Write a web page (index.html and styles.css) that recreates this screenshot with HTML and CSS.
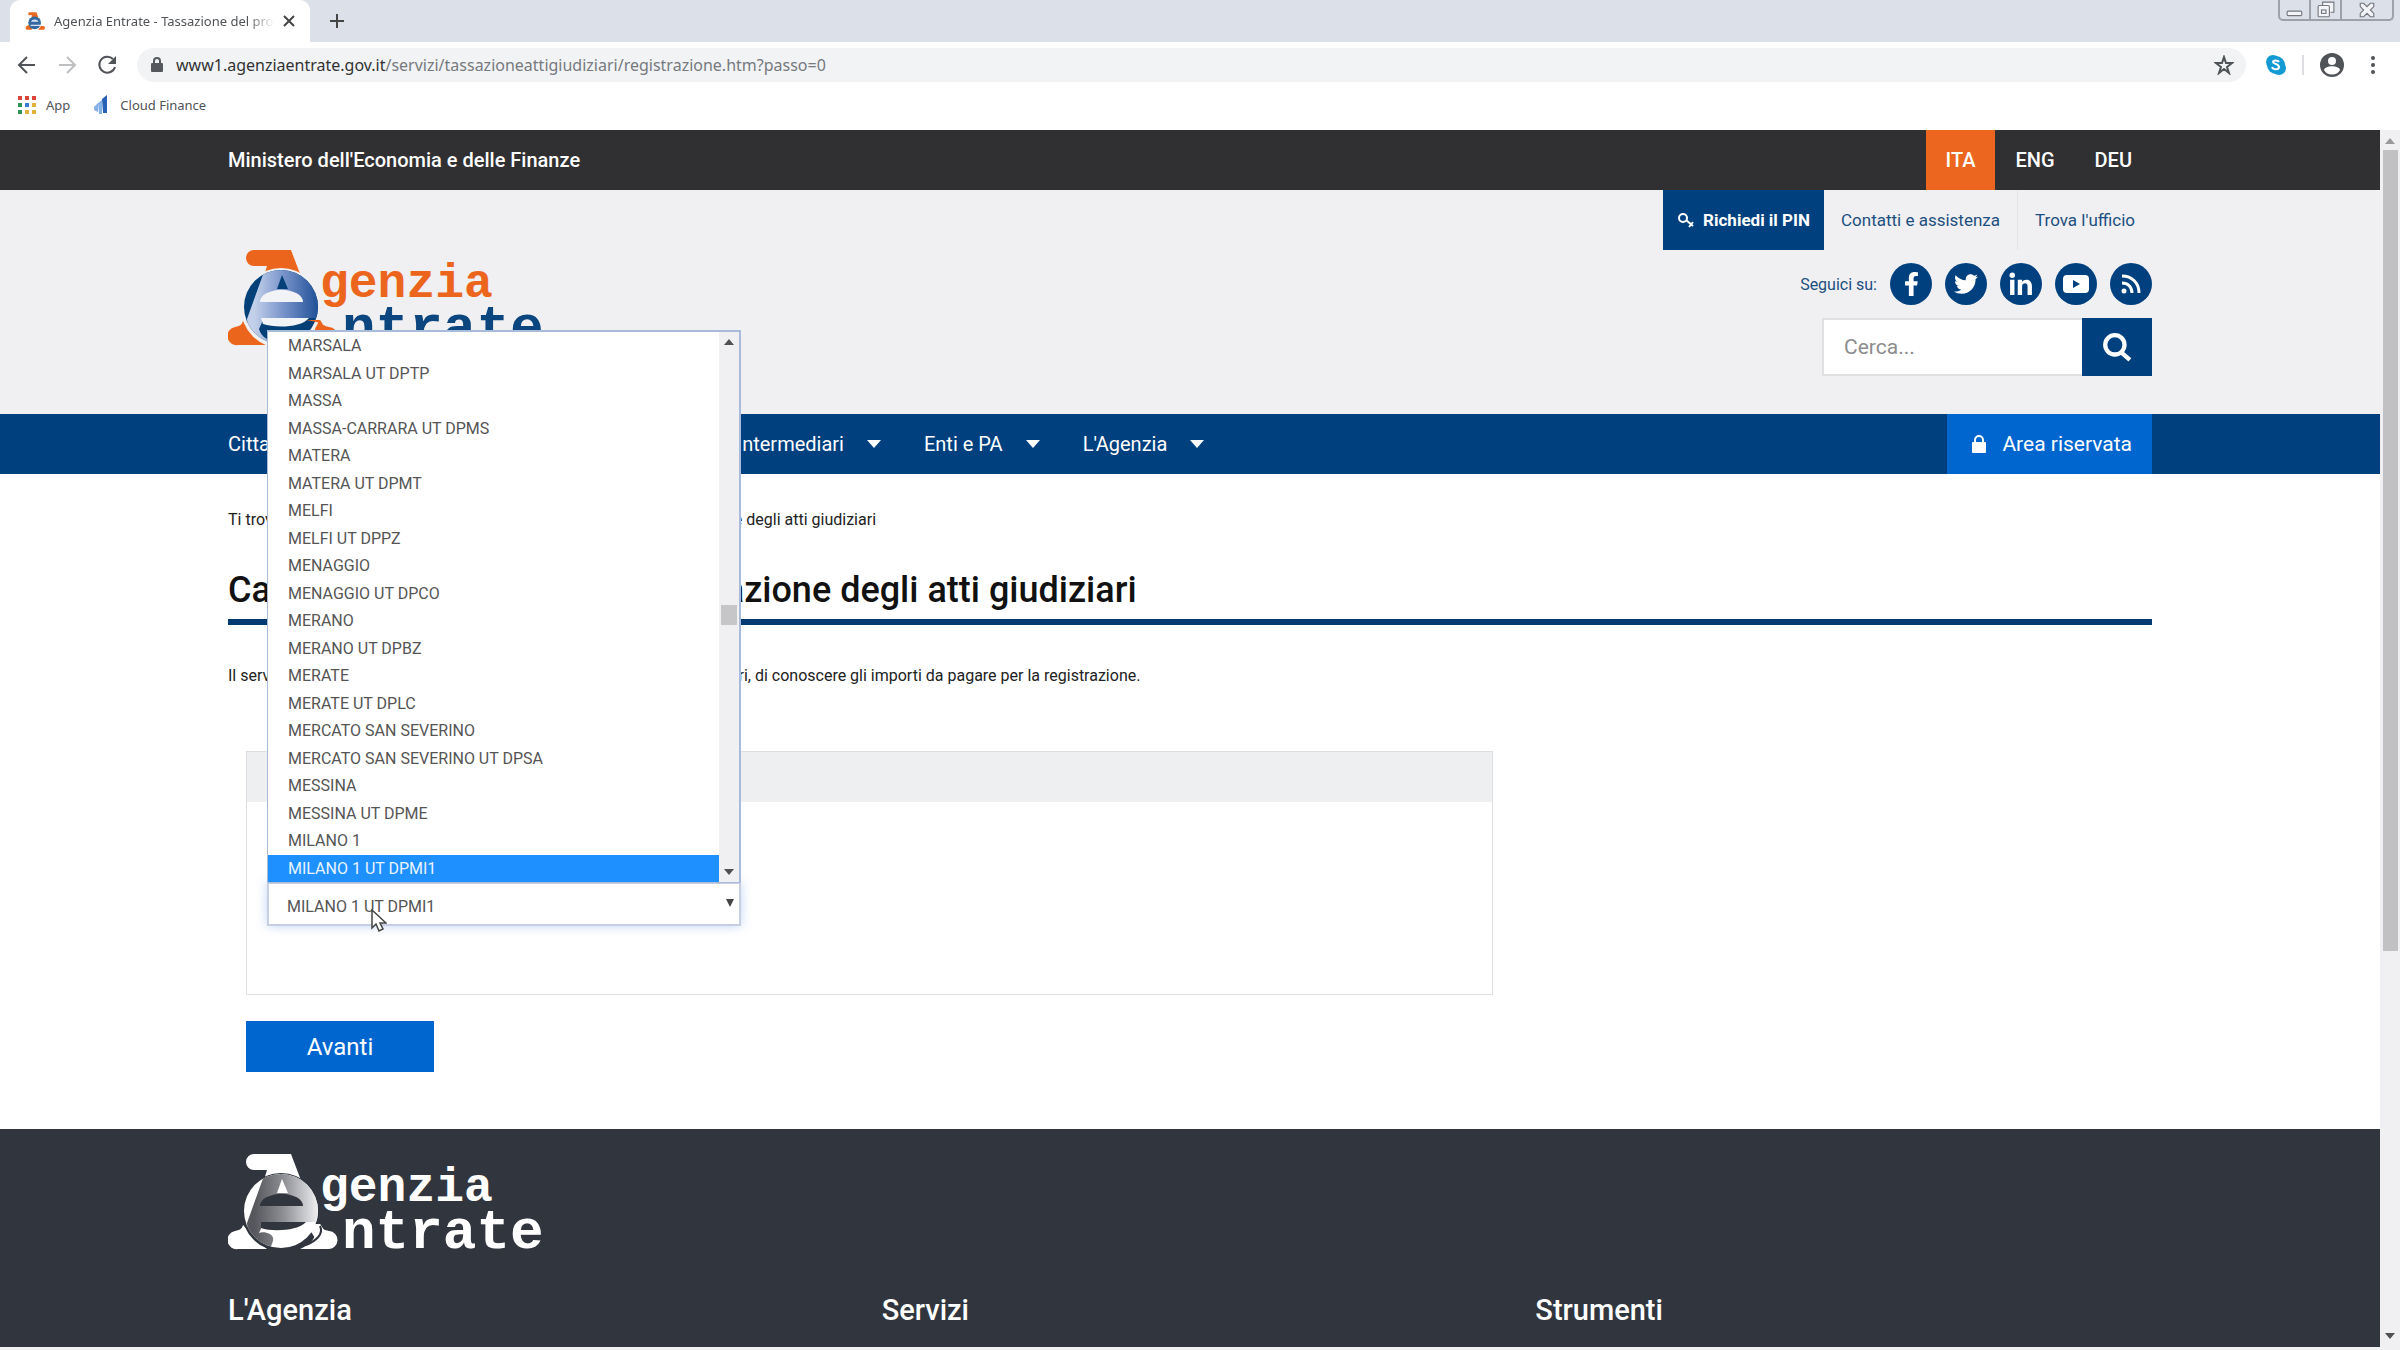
FILE: index.html
```html
<!DOCTYPE html>
<html lang="it">
<head>
  <meta charset="UTF-8">
  <meta name="viewport" content="width=device-width, initial-scale=1.0">
  <title>Agenzia Entrate - Tassazione del provvedimento</title>
  <link rel="stylesheet" href="styles.css">
</head>
<body>
  <!-- Browser -->
  <header class="browser">
    <div class="tabstrip">
      <div class="tab">
        <svg class="favicon" viewBox="0 0 110 96">
          <path fill="#e9691f" d="M26 0h37l10 27H35l4-10H26a8 8 0 0 1 0-17zM18 72h20v24H10a11 11 0 0 1 0-20zM88 76h12a10 10 0 0 1 0 20H72z"/>
          <circle cx="53" cy="58" r="35" fill="#33699f"/>
          <path fill="#d5e2f3" d="M33 52a21 15 0 0 1 41 0zM30 68h60v8H32z"/>
        </svg>
        <span class="tab-title">Agenzia Entrate - Tassazione del provvedimento</span>
        <button class="icon-btn tab-close" aria-label="Chiudi scheda"><svg viewBox="0 0 12 12" width="12" height="12"><path d="M1 1l10 10M11 1L1 11" stroke="#444" stroke-width="2"/></svg></button>
      </div>
      <button class="icon-btn new-tab" aria-label="Nuova scheda"><svg viewBox="0 0 16 16" width="16" height="16"><path d="M8 1v14M1 8h14" stroke="#444" stroke-width="2"/></svg></button>
      <div class="window-btns">
        <button aria-label="Riduci"><svg viewBox="0 0 16 16" width="18" height="18"><rect x="1" y="9" width="13" height="4" rx="1"/></svg></button>
        <button aria-label="Ripristina"><svg viewBox="0 0 16 16" width="18" height="18"><path d="M5 4V1h10v9h-3"/><rect x="1" y="4" width="10" height="10" rx="1"/><rect x="4" y="8" width="4" height="3"/></svg></button>
        <button class="wide" aria-label="Chiudi"><svg viewBox="0 0 16 16" width="18" height="18"><path d="M2 2h3l3 3 3-3h3v3l-3 3 3 3v3h-3l-3-3-3 3H2v-3l3-3-3-3z"/></svg></button>
      </div>
    </div>
    <div class="toolbar">
      <button class="icon-btn" aria-label="Indietro"><svg viewBox="0 0 20 20" width="20" height="20"><path d="M18 10H3M10 2l-8 8 8 8" fill="none" stroke="#505357" stroke-width="2"/></svg></button>
      <button class="icon-btn" aria-label="Avanti"><svg viewBox="0 0 20 20" width="20" height="20"><path d="M2 10h15M10 2l8 8-8 8" fill="none" stroke="#bdbfc2" stroke-width="2"/></svg></button>
      <button class="icon-btn" aria-label="Ricarica"><svg viewBox="0 0 20 20" width="20" height="20"><path d="M16 4a8 8 0 1 0 2 8" fill="none" stroke="#505357" stroke-width="2"/><path d="M19 1v8h-8z" fill="#505357"/></svg></button>
      <div class="address">
        <svg viewBox="0 0 12 16" width="12" height="16"><rect y="6" width="12" height="9" rx="1" fill="#55585c"/><path d="M3 7V4a3 3 0 0 1 6 0v3" fill="none" stroke="#55585c" stroke-width="2"/></svg>
        <span class="url">www1.agenziaentrate.gov.it<span>/servizi/tassazioneattigiudiziari/registrazione.htm?passo=0</span></span>
        <svg class="star" viewBox="0 0 20 20" width="20" height="20"><path d="M10 2l2 6h6l-5 4 2 6-5-4-5 4 2-6-5-4h6z" fill="none" stroke="#505357" stroke-width="2"/></svg>
      </div>
      <svg class="skype" viewBox="0 0 20 20" width="20" height="20"><circle cx="7" cy="7" r="7" fill="#149ad3"/><circle cx="13" cy="13" r="7" fill="#149ad3"/><circle cx="10" cy="10" r="9" fill="#149ad3"/><path d="M13 7c-1-2-6-2-6 0s6 2 6 5-6 3-7 0" fill="none" stroke="#fff" stroke-width="2"/></svg>
      <span class="divider"></span>
      <svg class="avatar" viewBox="0 0 24 24" width="24" height="24"><circle cx="12" cy="12" r="12" fill="#505357"/><circle cx="12" cy="8" r="4" fill="#fff"/><path d="M4 17c1-5 15-5 16 0-3 6-13 6-16 0z" fill="#fff"/></svg>
      <button class="icon-btn menu" aria-label="Menu"><svg viewBox="0 0 4 18" width="4" height="18" fill="#505357"><circle cx="2" cy="2" r="2"/><circle cx="2" cy="9" r="2"/><circle cx="2" cy="16" r="2"/></svg></button>
    </div>
    <nav class="bookmarks">
      <a href="#"><svg viewBox="0 0 18 18" width="18" height="18"><path fill="#d9453a" d="M0 0h4v4H0zM7 0h4v4H7zM14 0h4v4h-4z"/><path fill="#2f9152" d="M0 7h4v4H0zM0 14h4v4H0z"/><path fill="#3b7bd8" d="M7 7h4v4H7z"/><path fill="#e3b23c" d="M14 7h4v4h-4zM7 14h4v4H7zM14 14h4v4h-4z"/></svg>App</a>
      <a href="#"><svg viewBox="0 0 16 20" width="16" height="20"><path fill="#86b1e6" d="M0 12l4-4v9l-4-2zM4 8l4-3v14H5z"/><path fill="#2a61b8" d="M8 4l5-4v18H9z"/></svg>Cloud Finance</a>
    </nav>
  </header>

  <div class="viewport">
    <div class="page">
      <div class="topbar">
        <div class="container">
          <a href="#">Ministero dell'Economia e delle Finanze</a>
          <nav class="langs">
            <a class="active" href="#">ITA</a>
            <a href="#">ENG</a>
            <a href="#">DEU</a>
          </nav>
        </div>
      </div>

      <div class="masthead">
        <div class="container">
          <a class="logo" href="#" aria-label="Agenzia Entrate">
            <svg viewBox="0 0 320 100" width="320" height="100">
              <defs>
                <linearGradient id="blue" x1="0" x2="1"><stop offset="0.1" stop-color="#c3d0ea"/><stop offset="0.5" stop-color="#7793ca"/><stop offset="1" stop-color="#1c4d95"/></linearGradient>
                <clipPath id="ball"><circle cx="53" cy="58" r="37"/></clipPath>
              </defs>
              <path fill="#ec651c" d="M26 1h37l11 29H35l4-13H26a8 8 0 0 1 0-16z"/>
              <path fill="#ec651c" d="M15 72l24 24H10a9 9 0 0 1-3-18c6-1 7-3 8-6z"/>
              <path fill="#ec651c" d="M78 71h14c2 5 4 6 9 7a9 9 0 0 1-1 18H72c10-4 18-12 14-20z"/>
              <circle cx="53" cy="59" r="40" fill="#f0f0f2"/>
              <g clip-path="url(#ball)">
                <rect x="10" y="20" width="90" height="80" fill="#034078"/>
                <path fill="url(#blue)" d="M37 20h32c15 8 24 24 23 49H36l-5 11c2 8 10 12 18 14l-12 3C26 94 20 86 19 70z"/>
                <path fill="#034078" d="M54 26l6 14H49z"/>
                <path fill="#f2f3f6" d="M32 53a21 12 0 0 1 43 0zM33 69h48c-8 10-34 10-46 6z"/>
              </g>
              <path fill="#ec651c" d="M78 71h14l6 9c0-4-3-6-20-9z"/>
              <text class="logo-top" x="92" y="48" fill="#ec651c">genzia</text>
              <text class="logo-bottom" x="114" y="95" fill="#0b467f">ntrate</text>
            </svg>
          </a>
          <div class="tools">
            <nav class="quick">
              <a class="pin" href="#"><svg viewBox="0 0 18 16" width="18" height="16" fill="none" stroke="#fff" stroke-width="2"><circle cx="6" cy="6" r="4"/><path d="M9 8l7 6M12 15l4-5"/></svg>Richiedi il PIN</a>
              <a href="#">Contatti e assistenza</a>
              <a href="#">Trova l'ufficio</a>
            </nav>
            <div class="social">
              <span>Seguici su:</span>
              <a href="#" aria-label="Facebook"><svg viewBox="0 0 320 512" height="24"><path d="M279 288l14-93h-89v-60c0-25 13-50 53-50h40V6s-37-6-72-6C152 0 104 44 104 125v70H23v93h81v224h100V288z"/></svg></a>
              <a href="#" aria-label="Twitter"><svg viewBox="0 0 512 512" height="24"><path d="M459.4 151.7c.3 4.5.3 9.1.3 13.6 0 138.7-105.6 298.6-298.6 298.6-59.5 0-114.7-17.2-161.1-47.1 8.4 1 16.6 1.3 25.3 1.3 49.1 0 94.2-16.6 130.3-44.8-46.1-1-84.8-31.2-98.1-72.8 6.5 1 13 1.6 19.8 1.6 9.4 0 18.8-1.3 27.6-3.6-48.1-9.7-84.1-52-84.1-103v-1.3c14 7.8 30.2 12.7 47.4 13.3-28.3-18.8-46.8-51-46.8-87.4 0-19.5 5.2-37.4 14.3-53 51.7 63.7 129.3 105.3 216.4 109.8-1.6-7.8-2.6-15.9-2.6-24 0-57.8 46.8-104.9 104.9-104.9 30.2 0 57.5 12.7 76.7 33.1 23.7-4.5 46.5-13.3 66.6-25.3-7.8 24.4-24.4 44.8-46.1 57.8 21.1-2.3 41.6-8.1 60.4-16.2-14.3 20.8-32.2 39.3-52.6 54.3z"/></svg></a>
              <a href="#" aria-label="LinkedIn"><svg viewBox="0 0 22 22" height="24"><circle cx="3" cy="3" r="2.500"/><path d="M1 7h4v14H1zM8 7h4v2c2-3 9-3 9 4v8h-4v-8c0-4-5-3-5 0v8H8z"/></svg></a>
              <a href="#" aria-label="YouTube"><svg viewBox="0 0 26 20" height="20"><path d="M4 1h18q4 0 4 4v10q0 4-4 4H4q-4 0-4-4V5q0-4 4-4zm6 5v8l7-4z"/></svg></a>
              <a href="#" aria-label="RSS"><svg viewBox="0 0 20 20" height="20"><circle cx="3" cy="17" r="2.500"/><path d="M1 9c6 0 10 4 10 10M1 2c10 0 17 7 17 17" fill="none" stroke="#fff" stroke-width="3"/></svg></a>
            </div>
            <form class="search">
              <input type="text" placeholder="Cerca..." aria-label="Cerca">
              <button type="button" aria-label="Avvia ricerca"><svg viewBox="0 0 28 28" width="30" height="30" fill="none" stroke="#fff" stroke-width="4"><circle cx="12" cy="12" r="9"/><path d="M18 19l8 7"/></svg></button>
            </form>
          </div>
        </div>
      </div>

      <div class="mainnav">
        <div class="container">
          <nav>
            <a href="#">Cittadini</a>
            <a href="#">Imprese</a>
            <a href="#">Professionisti</a>
            <a href="#">Intermediari</a>
            <a href="#">Enti e PA</a>
            <a href="#">L'Agenzia</a>
          </nav>
          <a class="reserved" href="#"><svg viewBox="0 0 14 18" width="14" height="18"><rect y="7" width="14" height="11" rx="1" fill="#fff"/><path d="M3 8V5a4 4 0 0 1 8 0v3" fill="none" stroke="#fff" stroke-width="2"/></svg>Area riservata</a>
        </div>
      </div>

      <main class="container content">
        <p class="breadcrumb">Ti trovi in: Home &gt; Servizi online &gt; Calcolo degli importi per la tassazione degli atti giudiziari</p>
        <h1>Calcolo degli importi della tassazione degli atti giudiziari</h1>
        <p class="intro">Il servizio consente, indicando gli estremi dei vari provvedimenti giudiziari, di conoscere gli importi da pagare per la registrazione.</p>

        <form class="office-form">
          <fieldset>
            <label class="legend" for="ufficio">Ufficio</label>
            <div class="field">
              <select id="ufficio">
                <option>MILANO 1 UT DPMI1</option>
              </select>
              <div class="dropdown">
                <ul>
                  <li>MARSALA</li>
                  <li>MARSALA UT DPTP</li>
                  <li>MASSA</li>
                  <li>MASSA-CARRARA UT DPMS</li>
                  <li>MATERA</li>
                  <li>MATERA UT DPMT</li>
                  <li>MELFI</li>
                  <li>MELFI UT DPPZ</li>
                  <li>MENAGGIO</li>
                  <li>MENAGGIO UT DPCO</li>
                  <li>MERANO</li>
                  <li>MERANO UT DPBZ</li>
                  <li>MERATE</li>
                  <li>MERATE UT DPLC</li>
                  <li>MERCATO SAN SEVERINO</li>
                  <li>MERCATO SAN SEVERINO UT DPSA</li>
                  <li>MESSINA</li>
                  <li>MESSINA UT DPME</li>
                  <li>MILANO 1</li>
                  <li class="selected">MILANO 1 UT DPMI1</li>
                </ul>
                <div class="list-scroll">
                  <span class="arrow up"></span>
                  <span class="thumb"></span>
                  <span class="arrow down"></span>
                </div>
              </div>
              <svg class="cursor" viewBox="0 0 16 24" width="16" height="24"><path d="M1 1v18l4-4 3 7 4-2-3-6h6z" fill="#fff" stroke="#444" stroke-width="1.500"/></svg>
            </div>
          </fieldset>
          <button type="button" class="submit">Avanti</button>
        </form>
      </main>

      <footer class="footer">
        <div class="container">
          <svg class="footer-logo" viewBox="0 0 320 100" width="320" height="100">
            <defs>
              <linearGradient id="grey" x1="0" x2="1"><stop offset="0.1" stop-color="#55575c"/><stop offset="0.5" stop-color="#8d8f95"/><stop offset="1" stop-color="#f4f4f6"/></linearGradient>
            </defs>
            <path fill="#fff" d="M26 1h37l11 29H35l4-13H26a8 8 0 0 1 0-16z"/>
            <path fill="#fff" d="M15 72l24 24H10a9 9 0 0 1-3-18c6-1 7-3 8-6z"/>
            <path fill="#fff" d="M78 71h14c2 5 4 6 9 7a9 9 0 0 1-1 18H72c10-4 18-12 14-20z"/>
            <circle cx="53" cy="59" r="39" fill="#31363e"/>
            <g clip-path="url(#ball)">
              <rect x="10" y="20" width="90" height="80" fill="#fff"/>
              <path fill="url(#grey)" d="M37 20h32c15 8 24 24 23 49H36l-5 11c4-2 16 0 14 8l-3 8C26 94 20 86 19 70z"/>
              <path fill="#fff" d="M54 26l6 14H49z"/>
              <path fill="#31363e" d="M32 53a21 12 0 0 1 43 0zM33 69h45c-8 9-34 10-45 6z"/>
            </g>
            <path fill="#fff" d="M78 71h14l6 9-9 8z"/>
            <path fill="none" stroke="#31363e" stroke-width="2" d="M92 73c4 8-4 15-14 19"/>
            <text class="logo-top" x="92" y="48" fill="#fff">genzia</text>
            <text class="logo-bottom" x="114" y="95" fill="#fff">ntrate</text>
          </svg>
          <div class="footer-cols">
            <h2>L'Agenzia</h2>
            <h2>Servizi</h2>
            <h2>Strumenti</h2>
          </div>
        </div>
      </footer>
    </div>
    <div class="page-scroll">
      <span class="arrow up"></span>
      <span class="thumb"></span>
      <span class="arrow down"></span>
    </div>
  </div>
</body>
</html>
```
FILE: styles.css
```css
:root {
  --navy: #00407f;
  --blue: #0066cf;
  --orange: #ec6620;
  --dark: #303032;
  --light: #f0f0f2;
  --footer: #31363e;
}

* {
  box-sizing: border-box;
}

body {
  margin: 0;
  height: 100vh;
  display: flex;
  flex-direction: column;
  font-family: Roboto, "Liberation Sans", sans-serif;
  font-size: 16px;
  color: #222;
  background: #fff;
}

a {
  color: inherit;
  text-decoration: none;
}

button {
  font-family: inherit;
  border: none;
  padding: 0;
}

svg {
  flex: none;
}

/* Browser */
.browser {
  flex: none;
  font-family: "Noto Sans", sans-serif;
  font-size: 13px;
  color: #505357;
}

.icon-btn {
  display: flex;
  background: none;
}

.tabstrip {
  display: flex;
  height: 42px;
  padding-left: 10px;
  background: #dce0e9;
}

.tab {
  display: flex;
  align-items: center;
  width: 300px;
  padding: 0 15px;
  gap: 9px;
  background: #fff;
  border-radius: 10px 10px 0 0;
}

.favicon {
  width: 20px;
  height: 18px;
}

.tab-title {
  flex: 1;
  white-space: nowrap;
  overflow: hidden;
  mask-image: linear-gradient(to right, #000 88%, transparent);
}

.new-tab {
  align-self: center;
  margin-left: 19px;
}

.window-btns {
  display: flex;
  margin-left: auto;
  margin-right: 6px;
  height: 21px;
  border: 2px solid #9da1a9;
  border-top: none;
  border-radius: 0 0 5px 5px;
}

.window-btns button {
  width: 31px;
  background: none;
  display: flex;
  align-items: center;
  justify-content: center;
  border-right: 2px solid #9da1a9;
}

.window-btns .wide {
  width: 50px;
  border-right: none;
}

.window-btns svg {
  fill: #f2f4f8;
  stroke: #74777d;
}

.toolbar {
  display: flex;
  align-items: center;
  height: 46px;
  padding: 0 25px 0 17px;
  gap: 20px;
}

.address {
  flex: 1;
  display: flex;
  align-items: center;
  height: 34px;
  padding: 0 12px 0 14px;
  gap: 13px;
  background: #f1f3f5;
  border-radius: 17px;
}

.url {
  font-size: 16px;
  color: #333;
}

.url span {
  color: #777a7e;
}

.star {
  margin-left: auto;
}

.divider {
  width: 2px;
  height: 20px;
  margin: 0 -4px;
  background: #dcdee1;
}

.menu {
  margin-left: 7px;
}

.bookmarks {
  display: flex;
  gap: 24px;
  height: 42px;
  padding: 0 18px 8px;
}

.bookmarks a {
  display: flex;
  align-items: center;
  gap: 10px;
}

/* Page area */
.viewport {
  flex: 1;
  min-height: 0;
  display: flex;
  overflow: hidden;
  border-bottom: 3px solid #f0f0f2;
}

.page {
  flex: 1;
  display: flex;
  flex-direction: column;
}

.container {
  width: 100%;
  max-width: 1924px;
  margin: 0 auto;
}

.arrow {
  border: 5px solid transparent;
}

.arrow.up {
  border-top: none;
  border-bottom: 6px solid #505050;
}

.arrow.down {
  border-bottom: none;
  border-top: 6px solid #505050;
}

.page-scroll {
  display: flex;
  flex-direction: column;
  align-items: center;
  width: 20px;
  padding: 8px 0;
  background: #f0f0f3;
}

.page-scroll .up {
  border-bottom-color: #999;
}

.page-scroll .thumb {
  width: 15px;
  height: calc(200% / 3);
  margin: 6px 0 auto;
  background: #c1c1c3;
}

/* Header */
.topbar {
  background: var(--dark);
  color: #fff;
  font-size: 20px;
  font-weight: 500;
}

.topbar .container {
  display: flex;
  justify-content: space-between;
  align-items: center;
}

.langs {
  display: flex;
}

.langs a {
  padding: 0 20px;
  line-height: 60px;
}

.langs .active {
  background: var(--orange);
}

.masthead {
  background: var(--light);
}

.masthead .container {
  display: flex;
  justify-content: space-between;
  height: 224px;
}

.logo {
  margin-top: 59px;
}

.logo-top,
.logo-bottom {
  font-family: "Liberation Mono", monospace;
  font-weight: bold;
}

.logo-top {
  font-size: 48px;
}

.logo-bottom {
  font-size: 56px;
}

.tools {
  display: flex;
  flex-direction: column;
  align-items: flex-end;
  gap: 13px;
  color: #1d4f80;
}

.quick {
  display: flex;
  font-size: 17px;
}

.quick a {
  padding: 0 17px;
  line-height: 60px;
}

.quick a + a + a {
  border-left: 1px solid #e2e3e6;
}

.quick .pin {
  display: flex;
  align-items: center;
  gap: 8px;
  padding: 0 14px;
  background: var(--navy);
  color: #fff;
  font-weight: bold;
}

.social {
  display: flex;
  align-items: center;
  gap: 13px;
}

.social a {
  width: 42px;
  height: 42px;
  border-radius: 50%;
  background: var(--navy);
  display: flex;
  align-items: center;
  justify-content: center;
}

.social svg {
  fill: #fff;
}

.search {
  display: flex;
  width: 330px;
  height: 58px;
}

.search input {
  flex: 1;
  min-width: 0;
  border: 2px solid #e0e0e2;
  border-right: none;
  padding: 0 20px;
  font-family: inherit;
  font-size: 21px;
}

.search input::placeholder {
  color: #8c8c8e;
}

.search button {
  width: 70px;
  background: var(--navy);
}

.search button svg {
  vertical-align: middle;
}

.mainnav {
  background: var(--navy);
  color: #fff;
  font-size: 20px;
  line-height: 60px;
}

.mainnav .container,
.mainnav nav {
  display: flex;
  justify-content: space-between;
}

.mainnav nav {
  gap: 43px;
}

.mainnav nav a {
  display: flex;
  align-items: center;
  gap: 23px;
}

.mainnav nav a::after {
  content: "";
  border: 7px solid transparent;
  border-top: 8px solid #fff;
  border-bottom: none;
}

.reserved {
  display: flex;
  align-items: center;
  gap: 16px;
  padding: 0 20px 0 25px;
  background: var(--blue);
  font-size: 21px;
}

/* Content */
.breadcrumb,
.intro {
  margin: 0;
  line-height: 24px;
}

.breadcrumb {
  padding-top: 34px;
}

h1 {
  margin: 34px 0 39px;
  padding-bottom: 5px;
  border-bottom: 6px solid #003a70;
  font-size: 36px;
  line-height: 48px;
  font-weight: 500;
  color: #111;
}

.office-form {
  padding: 63px 0 57px 18px;
}

fieldset {
  width: 1247px;
  max-width: 100%;
  height: 244px;
  margin: 0;
  padding: 0;
  border: 1px solid #dedfe2;
}

.legend {
  display: block;
  padding-left: 20px;
  line-height: 50px;
  background: #eeeff1;
}

.field {
  position: relative;
  width: 474px;
  margin: 80px 0 0 20px;
}

.field select {
  display: block;
  width: 100%;
  height: 44px;
  padding: 5px 18px 0;
  appearance: none;
  border: 2px solid #c9cfe2;
  border-radius: 0;
  box-shadow: 0 0 10px rgba(100, 150, 230, 0.4);
  background: #fff;
  font-family: inherit;
  font-size: 16px;
  color: #555;
}

.field::after {
  content: "";
  position: absolute;
  right: 7px;
  top: 17px;
  border: 4px solid transparent;
  border-top: 8px solid #444;
  border-bottom: none;
}

.dropdown {
  position: absolute;
  left: 0;
  right: 0;
  bottom: 43px;
  height: 553px;
  display: flex;
  border: 2px solid #a9bbdb;
  border-width: 2px 2px 1px 1px;
  background: #fff;
}

.dropdown ul {
  flex: 1;
  display: flex;
  flex-direction: column;
  margin: 0;
  padding: 0;
  list-style: none;
}

.dropdown li {
  flex: 1;
  display: flex;
  align-items: center;
  padding-left: 20px;
  color: #555;
}

.dropdown .selected {
  background: #1e90ff;
  color: #e8f4ff;
}

.list-scroll {
  display: flex;
  flex-direction: column;
  justify-content: space-between;
  align-items: center;
  width: 20px;
  padding: 7px 0;
  background: #f0f0f2;
}

.list-scroll .thumb {
  width: 16px;
  height: 20px;
  margin-top: 16px;
  background: #c6c5c8;
}

.cursor {
  position: absolute;
  left: 104px;
  top: 27px;
}

.submit {
  width: 188px;
  height: 51px;
  margin-top: 26px;
  background: var(--blue);
  color: #fff;
  font-size: 24px;
}

/* Footer */
.footer {
  flex: 1 0 auto;
  background: var(--footer);
  color: #fff;
}

.footer-logo {
  display: block;
  margin-top: 24px;
}

.footer-cols {
  display: grid;
  grid-template-columns: repeat(3, 1fr);
  gap: 37px;
  margin-top: 36px;
}

.footer h2 {
  margin: 0;
  font-size: 29px;
  line-height: 42px;
  font-weight: 500;
}
```
